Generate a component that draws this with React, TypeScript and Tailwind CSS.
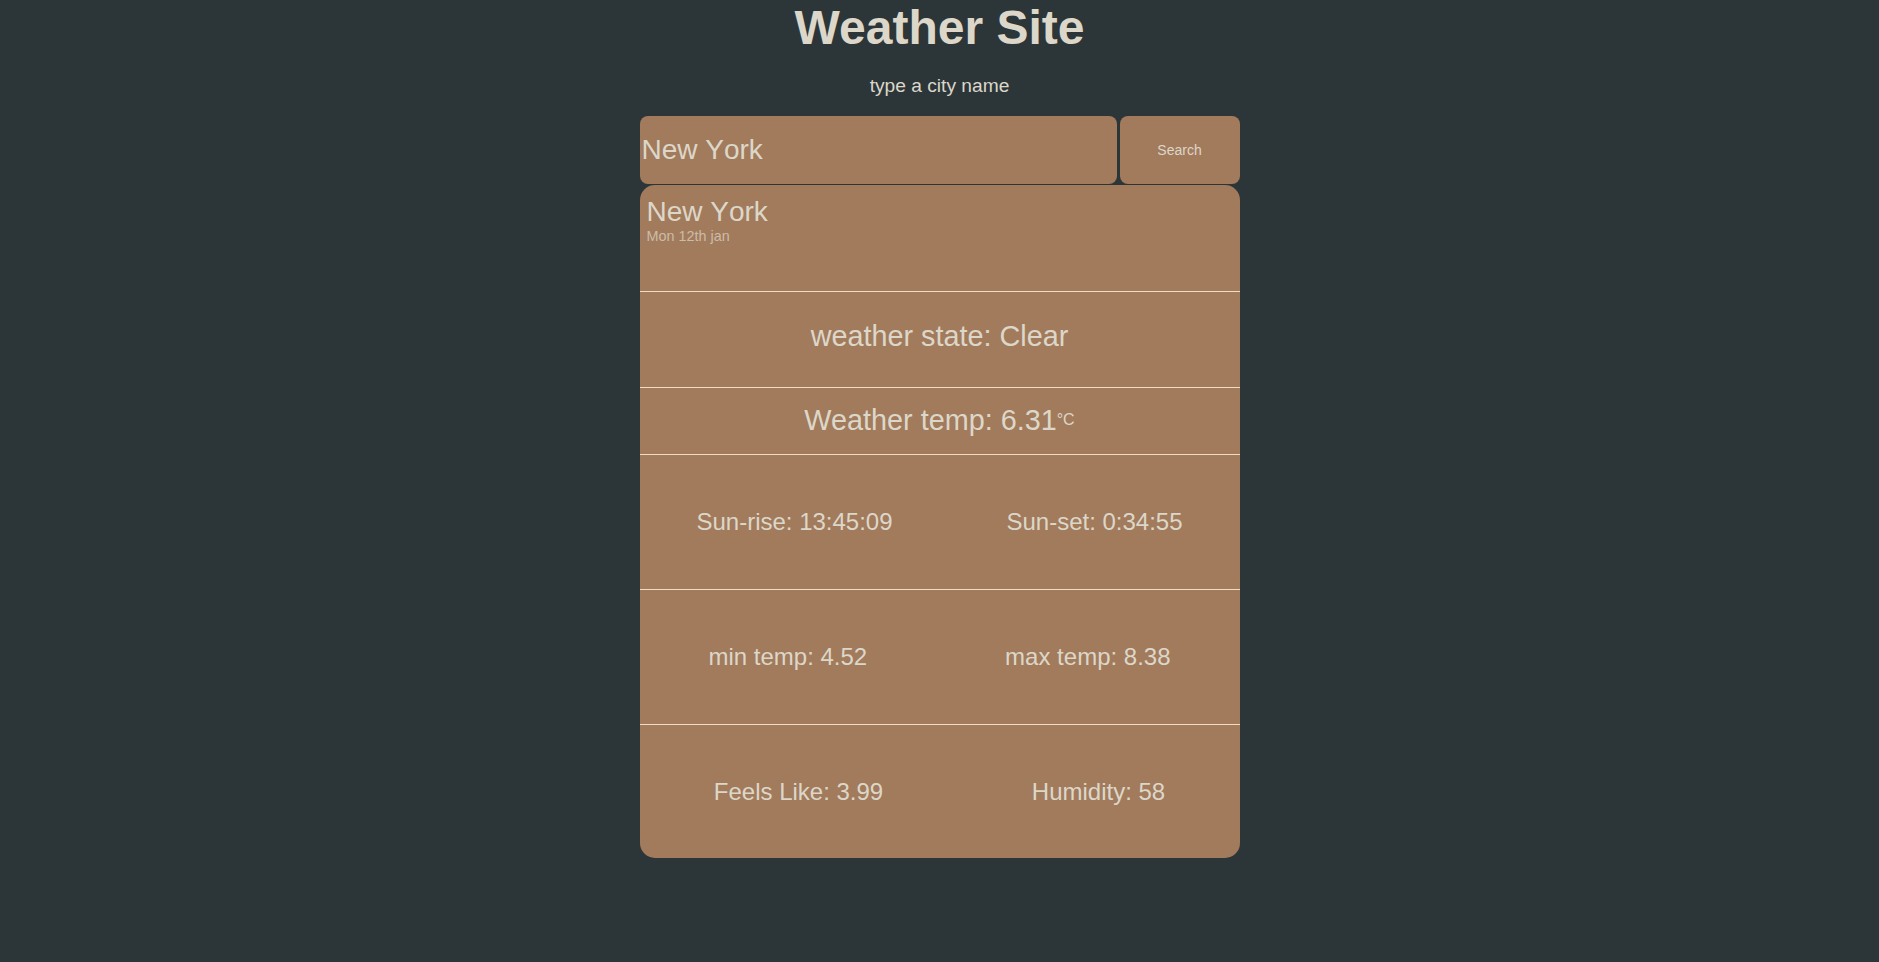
import React from "react";

function Row({ left, right, h }: { left: string; right: string; h: string }) {
  return (
    <div className={`flex items-center justify-around border-t border-[#efdcc2] ${h}`}>
      <span className="text-[24px]">{left}</span>
      <span className="text-[24px]">{right}</span>
    </div>
  );
}

export default function App() {
  return (
    <div className="min-h-screen bg-[#2C3639] text-[#DCD7C9] font-['Liberation_Sans',Arial,sans-serif] leading-[normal]">
      <h1 className="text-center text-[48px] font-bold leading-[normal]">Weather Site</h1>
      <p className="text-center text-[19.2px] leading-[normal] mt-[20.2px] mb-[19.2px]">type a city name</p>
      <div className="mx-auto w-[600px]">
        <div className="flex gap-[3px] h-[68px]">
          <input
            className="w-[477px] h-[68px] rounded-[8px] bg-[#A27B5C] text-[28px] [font-kerning:none] pl-[2px] outline-none text-[#DCD7C9]"
            defaultValue="New York"
          />
          <button className="w-[120px] h-[68px] rounded-[8px] bg-[#A27B5C] text-[14px]">Search</button>
        </div>
        <div className="mt-[1px] rounded-[15px] bg-[#A27B5C] overflow-hidden">
          <div className="h-[106px] pl-[7px] pt-[11px]">
            <h2 className="text-[28px] [font-kerning:none] leading-[normal]">New York</h2>
            <p className="text-[14.4px] leading-[normal] text-[#cbbca9]">Mon 12th jan</p>
          </div>
          <div className="h-[96px] border-t border-[#efdcc2] pt-[28px] text-center">
            <h2 className="text-[28.8px] leading-[normal]">weather state: Clear</h2>
          </div>
          <div className="h-[67px] border-t border-[#efdcc2] pt-[16px] text-center">
            <h2 className="text-[28.8px] leading-[normal]">
              Weather temp: 6.31<span className="text-[16px] align-[5px]">°C</span>
            </h2>
          </div>
          <Row left="Sun-rise: 13:45:09" right="Sun-set: 0:34:55" h="h-[135px]" />
          <Row left="min temp: 4.52" right="max temp: 8.38" h="h-[135px]" />
          <Row left="Feels Like: 3.99" right="Humidity: 58" h="h-[134px]" />
        </div>
      </div>
    </div>
  );
}
